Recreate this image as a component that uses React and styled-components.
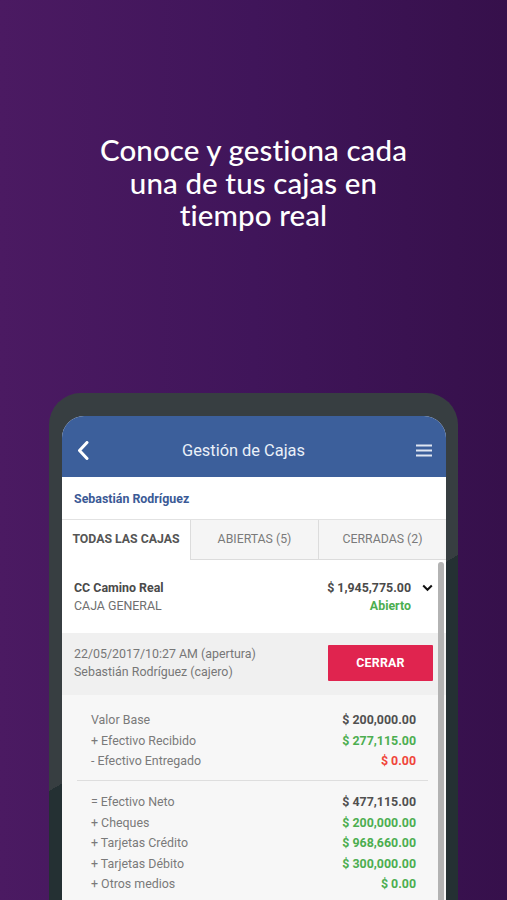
import React from "react";
import styled, { createGlobalStyle } from "styled-components";

const Global = createGlobalStyle`
  html, body { margin: 0; padding: 0; }
  body { background: #40155a; }
  * { box-sizing: border-box; }
`;

const Page = styled.div`
  width: 507px;
  height: 900px;
  overflow: hidden;
  background: linear-gradient(90deg, #4b1a62 0%, #40155a 50%, #36104b 100%);
  display: flex;
  flex-direction: column;
  align-items: center;
`;

const Headline = styled.h1`
  margin: 134px 0 0;
  font-family: Lato, "Open Sans", sans-serif;
  font-weight: 500;
  font-size: 29.5px;
  line-height: 32.5px;
  color: #ffffff;
  text-align: center;
  letter-spacing: 0.1px;
`;

const Phone = styled.div`
  margin-top: 161px;
  width: 409px;
  height: 560px;
  flex-shrink: 0;
  border-radius: 32px 32px 0 0;
  background: linear-gradient(150deg, #373e41 50%, #243033 50%);
  padding: 23px 12px 0 13px;
  display: flex;
`;

const Screen = styled.div`
  position: relative;
  flex: 1;
  background: #ffffff;
  border-radius: 22px 22px 0 0;
  overflow: hidden;
  font-family: Roboto, "Liberation Sans", sans-serif;
  display: flex;
  flex-direction: column;
`;

const Header = styled.div`
  height: 61px;
  padding: 9px 13px 0 12px;
  background: #3c5f9b;
  display: flex;
  align-items: center;
  justify-content: space-between;
`;

const Title = styled.div`
  flex: 1;
  text-align: center;
  padding-right: 20px;
  color: #eaf0f8;
  font-size: 16.4px;
  font-weight: 400;
`;

const IconBox = styled.div`
  width: 18px;
  height: 20px;
  display: flex;
  align-items: center;
  justify-content: center;
`;

const NameRow = styled.div`
  height: 42px;
  padding: 1px 12px 0;
  display: flex;
  align-items: center;
  color: #3b5a96;
  font-size: 12.4px;
  font-weight: 700;
`;

const Tabs = styled.div`
  display: grid;
  grid-template-columns: 128px 128px 1fr;
  height: 41px;
  border-top: 1px solid #e2e2e2;
`;

const Tab = styled.div`
  display: flex;
  align-items: center;
  justify-content: center;
  font-size: 12.3px;
  text-transform: uppercase;
  font-weight: ${(p) => (p.$active ? 700 : 400)};
  color: ${(p) => (p.$active ? "#555555" : "#7a7a7a")};
  background: ${(p) => (p.$active ? "#ffffff" : "#f5f5f5")};
  border-bottom: 1px solid ${(p) => (p.$active ? "transparent" : "#dcdcdc")};
  border-left: ${(p) => (p.$first ? "none" : "1px solid #dcdcdc")};
`;

const ItemRow = styled.div`
  height: 73px;
  padding: 19px 13px 0 12px;
  display: flex;
  justify-content: space-between;
`;

const Col = styled.div`
  display: flex;
  flex-direction: column;
  align-items: ${(p) => (p.$right ? "flex-end" : "flex-start")};
  line-height: 18px;
  font-size: 12.4px;
`;

const Strong = styled.span`
  font-weight: 700;
  color: ${(p) => p.$color || "#4a4a4a"};
`;

const Muted = styled.span`
  color: #6f6f6f;
`;

const RightGroup = styled.div`
  display: flex;
  align-items: flex-start;
  gap: 11px;
`;

const Chevron = styled.div`
  padding-top: 5px;
  display: flex;
`;

const OpenBox = styled.div`
  height: 62px;
  background: #f0f0f0;
  padding: 0 13px 0 12px;
  display: flex;
  align-items: center;
  justify-content: space-between;
`;

const Meta = styled.div`
  font-size: 12.4px;
  line-height: 18px;
  color: #777777;
  margin-top: -2px;
`;

const CloseButton = styled.button`
  width: 105px;
  height: 36px;
  border: none;
  border-radius: 1px;
  background: #e0244f;
  color: #ffffff;
  font-family: Roboto, "Liberation Sans", sans-serif;
  font-weight: 700;
  font-size: 12.4px;
  letter-spacing: 0.2px;
  margin-top: -2px;
`;

const Summary = styled.div`
  flex: 1;
  background: #f7f7f7;
  padding: 15px 18px 0 15px;
`;

const Group = styled.div`
  padding: ${(p) => (p.$second ? "10px" : "0")} 12px 9px 14px;
  border-bottom: ${(p) => (p.$second ? "none" : "1px solid #dedede")};
`;

const Line = styled.div`
  display: flex;
  justify-content: space-between;
  height: 20.6px;
  align-items: center;
  font-size: 12.4px;
`;

const Label = styled.span`
  color: #7a7a7a;
`;

const Scrollbar = styled.div`
  position: absolute;
  right: 2px;
  top: 146px;
  bottom: 0;
  width: 6px;
  border-radius: 3px 3px 0 0;
  background: #b3b3b3;
`;

const GREEN = "#4cae50";
const RED = "#f0453a";

const group1 = [
  ["Valor Base", "$ 200,000.00", "#505050"],
  ["+ Efectivo Recibido", "$ 277,115.00", GREEN],
  ["- Efectivo Entregado", "$ 0.00", RED],
];

const group2 = [
  ["= Efectivo Neto", "$ 477,115.00", "#505050"],
  ["+ Cheques", "$ 200,000.00", GREEN],
  ["+ Tarjetas Crédito", "$ 968,660.00", GREEN],
  ["+ Tarjetas Débito", "$ 300,000.00", GREEN],
  ["+ Otros medios", "$ 0.00", GREEN],
];

export default function App() {
  return (
    <>
      <Global />
      <Page>
        <Headline>
          Conoce y gestiona cada
          <br />
          una de tus cajas en
          <br />
          tiempo real
        </Headline>
        <Phone>
          <Screen>
            <Header>
              <IconBox>
                <svg width="12" height="19" viewBox="0 0 12 19">
                  <polyline
                    points="10,1.5 2.5,9.5 10,17.5"
                    fill="none"
                    stroke="#ffffff"
                    strokeWidth="3"
                    strokeLinecap="round"
                    strokeLinejoin="round"
                  />
                </svg>
              </IconBox>
              <Title>Gestión de Cajas</Title>
              <IconBox>
                <svg width="16" height="13" viewBox="0 0 16 13">
                  <g stroke="#dfe6f2" strokeWidth="2">
                    <line x1="0" y1="1.5" x2="16" y2="1.5" />
                    <line x1="0" y1="6.5" x2="16" y2="6.5" />
                    <line x1="0" y1="11.5" x2="16" y2="11.5" />
                  </g>
                </svg>
              </IconBox>
            </Header>
            <NameRow>Sebastián Rodríguez</NameRow>
            <Tabs>
              <Tab $active $first>Todas las cajas</Tab>
              <Tab>Abiertas (5)</Tab>
              <Tab>Cerradas (2)</Tab>
            </Tabs>
            <ItemRow>
              <Col>
                <Strong>CC Camino Real</Strong>
                <Muted>CAJA GENERAL</Muted>
              </Col>
              <RightGroup>
                <Col $right>
                  <Strong>$ 1,945,775.00</Strong>
                  <Strong $color={GREEN}>Abierto</Strong>
                </Col>
                <Chevron>
                  <svg width="11" height="8" viewBox="0 0 11 8">
                    <polyline
                      points="1.2,1.5 5.5,5.8 9.8,1.5"
                      fill="none"
                      stroke="#111111"
                      strokeWidth="2"
                    />
                  </svg>
                </Chevron>
              </RightGroup>
            </ItemRow>
            <OpenBox>
              <Meta>
                22/05/2017/10:27 AM (apertura)
                <br />
                Sebastián Rodríguez (cajero)
              </Meta>
              <CloseButton>CERRAR</CloseButton>
            </OpenBox>
            <Summary>
              <Group>
                {group1.map(([l, v, c]) => (
                  <Line key={l}>
                    <Label>{l}</Label>
                    <Strong $color={c}>{v}</Strong>
                  </Line>
                ))}
              </Group>
              <Group $second>
                {group2.map(([l, v, c]) => (
                  <Line key={l}>
                    <Label>{l}</Label>
                    <Strong $color={c}>{v}</Strong>
                  </Line>
                ))}
              </Group>
            </Summary>
            <Scrollbar />
          </Screen>
        </Phone>
      </Page>
    </>
  );
}
